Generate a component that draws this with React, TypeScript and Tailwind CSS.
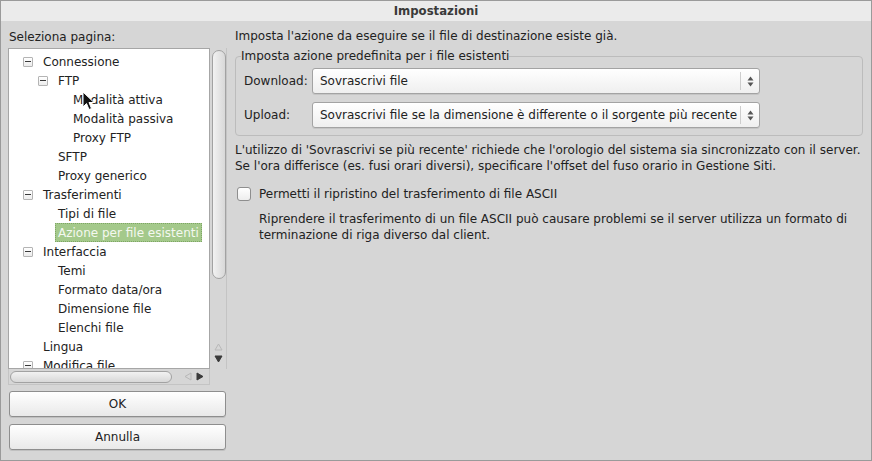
import React from "react";

type Item = { t: string; l: 0 | 1 | 2; e?: boolean; sel?: boolean };

const items: Item[] = [
  { t: "Connessione", l: 0, e: true },
  { t: "FTP", l: 1, e: true },
  { t: "Modalità attiva", l: 2 },
  { t: "Modalità passiva", l: 2 },
  { t: "Proxy FTP", l: 2 },
  { t: "SFTP", l: 1 },
  { t: "Proxy generico", l: 1 },
  { t: "Trasferimenti", l: 0, e: true },
  { t: "Tipi di file", l: 1 },
  { t: "Azione per file esistenti", l: 1, sel: true },
  { t: "Interfaccia", l: 0, e: true },
  { t: "Temi", l: 1 },
  { t: "Formato data/ora", l: 1 },
  { t: "Dimensione file", l: 1 },
  { t: "Elenchi file", l: 1 },
  { t: "Lingua", l: 0 },
  { t: "Modifica file", l: 0, e: true },
];

const indent: Record<number, string> = {
  0: "pl-[14px]",
  1: "pl-[29px]",
  2: "pl-[44px]",
};

function Expander() {
  return (
    <span className="flex h-[10px] w-[10px] items-center justify-center rounded-[1px] border border-[#b4b4b4] bg-gradient-to-b from-white to-[#ececec]">
      <span className="h-px w-[6px] bg-[#3a3a3a]" />
    </span>
  );
}

function Tri({ dir, light }: { dir: "up" | "down" | "left" | "right"; light?: boolean }) {
  const fill = light ? "none" : "#3a3a3a";
  const stroke = light ? "#b8b8b8" : "#3a3a3a";
  const pts =
    dir === "up"
      ? "1,7 4.5,1 8,7"
      : dir === "down"
      ? "1,1 4.5,7 8,1"
      : dir === "left"
      ? "7,1 1,4.5 7,8"
      : "1,1 7,4.5 1,8";
  return (
    <svg width="9" height="9" viewBox="0 0 9 9">
      <polygon points={pts} fill={fill} stroke={stroke} strokeWidth="1" />
    </svg>
  );
}

function Select({ value }: { value: string }) {
  return (
    <div className="flex h-[26px] w-[448px] items-center rounded-[3px] border border-[#a3a3a3] bg-gradient-to-b from-white to-[#efefef] shadow-[0_1px_0_rgba(0,0,0,0.08)]">
      <span className="flex-1 truncate pl-[7px]">{value}</span>
      <span className="h-[18px] w-px bg-[#cdcdcd]" />
      <span className="flex w-[18px] flex-col items-center justify-center gap-[1px]">
        <svg width="7" height="5" viewBox="0 0 7 5">
          <polygon points="0.5,4.5 3.5,0.5 6.5,4.5" fill="#555" />
        </svg>
        <svg width="7" height="5" viewBox="0 0 7 5">
          <polygon points="0.5,0.5 3.5,4.5 6.5,0.5" fill="#555" />
        </svg>
      </span>
    </div>
  );
}

function Button({ label }: { label: string }) {
  return (
    <div className="flex h-[26px] w-[217px] items-center justify-center rounded-[3px] border border-[#8e8e8e] bg-gradient-to-b from-white to-[#e9e9e9] shadow-[0_1px_0_rgba(0,0,0,0.1)]">
      {label}
    </div>
  );
}

export default function App() {
  return (
    <div
      className="relative flex h-[461px] w-[872px] flex-col overflow-hidden border border-[#9a9a9a] bg-[#d6d6d6] text-[12px] leading-[16px] text-[#222]"
      style={{ fontFamily: '"DejaVu Sans", Verdana, sans-serif' }}
    >
      {/* title bar */}
      <div
        className="flex h-[20px] shrink-0 items-center justify-center bg-[#ebebeb] text-[13px] font-bold text-[#3a3a3a]"
        style={{ fontFamily: '"DejaVu Sans Condensed", "DejaVu Sans", sans-serif', fontStretch: "condensed" }}
      >
        Impostazioni
      </div>

      <div className="flex flex-1 gap-[8px] pl-[7px] pr-[8px] pt-[7px]">
        {/* left column */}
        <div className="flex w-[219px] flex-col">
          <div className="h-[17px] pl-[1px] pt-[1px]">Seleziona pagina:</div>
          <div className="mt-[3px] flex">
            <div className="h-[321px] w-[202px] overflow-hidden border border-[#a6a6a6] bg-white pt-[3px]">
              {items.map((it) => (
                <div key={it.t} className={`flex h-[19px] items-center ${indent[it.l]}`}>
                  <span className="flex w-[20px] shrink-0 items-center">{it.e ? <Expander /> : null}</span>
                  {it.sel ? (
                    <span className="-ml-[3px] flex h-[19px] items-center whitespace-nowrap border border-dotted border-[#7ea565] bg-[#a4c98b] px-[2px] text-[#f4f8f0]">
                      {it.t}
                    </span>
                  ) : (
                    <span className="whitespace-nowrap">{it.t}</span>
                  )}
                </div>
              ))}
            </div>
            <div className="flex h-[321px] w-[17px] flex-col border-r border-[#c4c4c4] px-[2px] pt-[2px]">
              <div className="h-[229px] w-[14px] rounded-full border border-[#a2a2a2] bg-gradient-to-r from-[#f2f2f2] to-[#d8d8d8]" />
              <div className="flex-1" />
              <div className="flex flex-col items-center gap-[3px] pb-[5px]">
                <Tri dir="up" light />
                <Tri dir="down" />
              </div>
            </div>
          </div>
          <div className="flex">
            <div className="flex h-[16px] w-[202px] items-center border-x border-b border-[#c4c4c4] pl-[1px]">
              <div className="h-[12px] w-[162px] rounded-full border border-[#a2a2a2] bg-gradient-to-b from-[#f2f2f2] to-[#d8d8d8]" />
              <div className="ml-[12px] flex items-center gap-[3px]">
                <Tri dir="left" light />
                <Tri dir="right" />
              </div>
            </div>
          </div>
          <div className="mt-[6px] flex flex-col gap-[7px] pl-[1px]">
            <Button label="OK" />
            <Button label="Annulla" />
          </div>
        </div>

        {/* right column */}
        <div className="flex flex-1 flex-col">
          <div className="h-[16px]">Imposta l'azione da eseguire se il file di destinazione esiste già.</div>
          <fieldset className="mt-[4px] rounded-[4px] border border-[#bcbcbc] pb-[7px] pl-[8px] pt-[4px]">
            <legend className="-ml-[3px] leading-[16px]">Imposta azione predefinita per i file esistenti</legend>
            <div className="flex flex-col gap-[8px]">
              <div className="flex items-center">
                <span className="w-[68px]">Download:</span>
                <Select value="Sovrascrivi file" />
              </div>
              <div className="flex items-center">
                <span className="w-[68px]">Upload:</span>
                <Select value="Sovrascrivi file se la dimensione è differente o il sorgente più recente" />
              </div>
            </div>
          </fieldset>
          <p className="mt-[6px]">
            L'utilizzo di 'Sovrascrivi se più recente' richiede che l'orologio del sistema sia sincronizzato con il server.
            <br />
            Se l'ora differisce (es. fusi orari diversi), specificare l'offset del fuso orario in Gestione Siti.
          </p>
          <div className="mt-[12px] flex h-[16px] items-center pl-[2px]">
            <span className="h-[14px] w-[14px] rounded-[3px] border border-[#8e8e8e] bg-gradient-to-b from-white to-[#ededed]" />
            <span className="ml-[8px]">Permetti il ripristino del trasferimento di file ASCII</span>
          </div>
          <p className="mt-[9px] pl-[24px]">
            Riprendere il trasferimento di un file ASCII può causare problemi se il server utilizza un formato di
            <br />
            terminazione di riga diverso dal client.
          </p>
        </div>
      </div>

      {/* mouse pointer */}
      <svg className="pointer-events-none absolute left-[81px] top-[90px]" width="13" height="20" viewBox="0 0 13 20">
        <path d="M1 1 L1 16 L4.5 12.5 L7 18.5 L9.5 17.5 L7 11.5 L12 11.5 Z" fill="#111" stroke="#fff" strokeWidth="1" strokeLinejoin="round" />
      </svg>
    </div>
  );
}
